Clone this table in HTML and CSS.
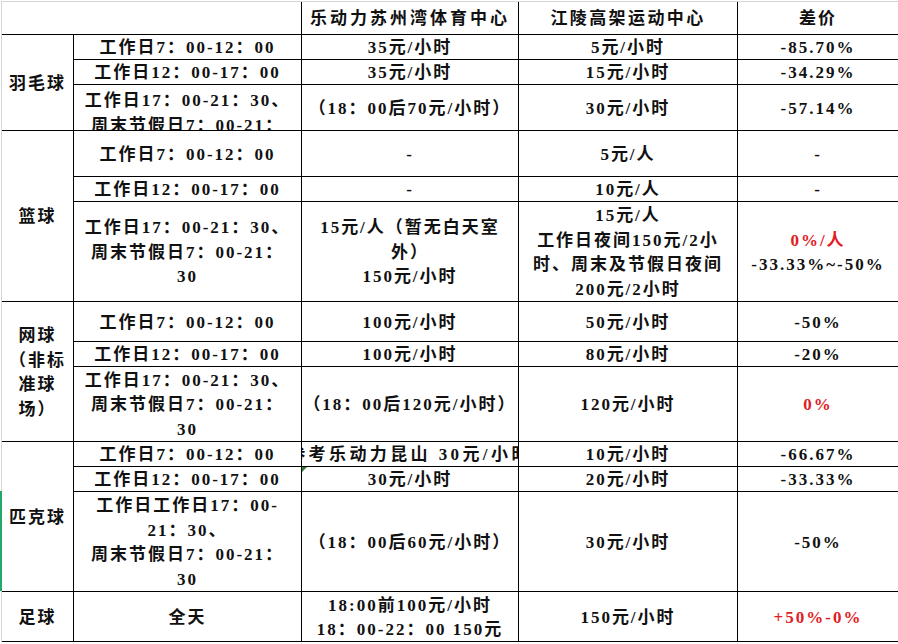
FILE: index.html
```html
<!DOCTYPE html>
<html lang="zh-CN">
<head>
<meta charset="utf-8">
<title>场馆价格对比</title>
<link rel="stylesheet" href="styles.css">
</head>
<body>
<div class="sheet">
  <div class="sel-bar"></div>

  <div class="c cs2"></div>
  <div class="c hd-a"><span class="t">乐动力苏州湾体育中心</span></div>
  <div class="c hd-b"><span class="t">江陵高架运动中心</span></div>
  <div class="c last"><span class="t">差价</span></div>

  <!-- 羽毛球 -->
  <div class="c rs3"><span class="t">羽毛球</span></div>
  <div class="c"><span class="t">工作日7：00-12：00</span></div>
  <div class="c"><span class="t">35元/小时</span></div>
  <div class="c"><span class="t">5元/小时</span></div>
  <div class="c last"><span class="t">-85.70%</span></div>

  <div class="c"><span class="t">工作日12：00-17：00</span></div>
  <div class="c"><span class="t">35元/小时</span></div>
  <div class="c"><span class="t">15元/小时</span></div>
  <div class="c last"><span class="t">-34.29%</span></div>

  <div class="c top"><span class="t">工作日17：00-21：30、<br>周末节假日7：00-21：</span></div>
  <div class="c"><span class="t">（18：00后70元/小时）</span></div>
  <div class="c"><span class="t">30元/小时</span></div>
  <div class="c last"><span class="t">-57.14%</span></div>

  <!-- 篮球 -->
  <div class="c rs3"><span class="t">篮球</span></div>
  <div class="c"><span class="t">工作日7：00-12：00</span></div>
  <div class="c"><span class="t">-</span></div>
  <div class="c"><span class="t">5元/人</span></div>
  <div class="c last"><span class="t">-</span></div>

  <div class="c"><span class="t">工作日12：00-17：00</span></div>
  <div class="c"><span class="t">-</span></div>
  <div class="c"><span class="t">10元/人</span></div>
  <div class="c last"><span class="t">-</span></div>

  <div class="c"><span class="t">工作日17：00-21：30、<br>周末节假日7：00-21：<br>30</span></div>
  <div class="c"><span class="t">15元/人（暂无白天室<br>外）<br>150元/小时</span></div>
  <div class="c"><span class="t">15元/人<br>工作日夜间150元/2小<br>时、周末及节假日夜间<br>200元/2小时</span></div>
  <div class="c last"><span class="t"><span class="red">0%/人</span><br>-33.33%~-50%</span></div>

  <!-- 网球 -->
  <div class="c rs3"><span class="t">网球<br>（非标<br>准球<br>场）</span></div>
  <div class="c"><span class="t">工作日7：00-12：00</span></div>
  <div class="c"><span class="t">100元/小时</span></div>
  <div class="c"><span class="t">50元/小时</span></div>
  <div class="c last"><span class="t">-50%</span></div>

  <div class="c"><span class="t">工作日12：00-17：00</span></div>
  <div class="c"><span class="t">100元/小时</span></div>
  <div class="c"><span class="t">80元/小时</span></div>
  <div class="c last"><span class="t">-20%</span></div>

  <div class="c"><span class="t">工作日17：00-21：30、<br>周末节假日7：00-21：<br>30</span></div>
  <div class="c"><span class="t">（18：00后120元/小时）</span></div>
  <div class="c"><span class="t">120元/小时</span></div>
  <div class="c last"><span class="t red">0%</span></div>

  <!-- 匹克球 -->
  <div class="c rs3"><span class="t">匹克球</span></div>
  <div class="c"><span class="t">工作日7：00-12：00</span></div>
  <div class="c wide"><span class="t">参考乐动力昆山 30元/小时</span></div>
  <div class="c"><span class="t">10元/小时</span></div>
  <div class="c last"><span class="t">-66.67%</span></div>

  <div class="c"><span class="t">工作日12：00-17：00</span></div>
  <div class="c flag"><span class="t">30元/小时</span></div>
  <div class="c"><span class="t">20元/小时</span></div>
  <div class="c last"><span class="t">-33.33%</span></div>

  <div class="c"><span class="t">工作日工作日17：00-<br>21：30、<br>周末节假日7：00-21：<br>30</span></div>
  <div class="c"><span class="t">（18：00后60元/小时）</span></div>
  <div class="c"><span class="t">30元/小时</span></div>
  <div class="c last"><span class="t">-50%</span></div>

  <!-- 足球 -->
  <div class="c"><span class="t">足球</span></div>
  <div class="c"><span class="t">全天</span></div>
  <div class="c"><span class="t">18:00前100元/小时<br>18：00-22：00 150元</span></div>
  <div class="c"><span class="t">150元/小时</span></div>
  <div class="c last"><span class="t red">+50%-0%</span></div>
</div>
</body>
</html>
```

FILE: styles.css
```css
html, body {
  margin: 0;
  padding: 0;
  background: #ffffff;
}

body {
  font-family: "Liberation Serif", "Noto Sans CJK SC", serif;
  font-weight: 700;
  font-size: 17px;
  color: #111111;
}

.sheet {
  position: relative;
  display: grid;
  grid-template-columns: 72px 228px 217px 219px 160px;
  grid-template-rows: 33px 25px 25px 46px 46px 25px 100px 40px 25px 75px 25px 25px 100px 50px;
  width: 896px;
  margin: 1px 0 0 1px;
  border-top: 1px solid #d6d6d6;
  border-left: 1px solid #d6d6d6;
}

.c {
  box-sizing: border-box;
  display: flex;
  flex-direction: column;
  align-items: center;
  justify-content: center;
  overflow: hidden;
  white-space: nowrap;
  text-align: center;
  border-right: 1px solid #000;
  border-bottom: 1px solid #000;
  padding-top: 3px;
  line-height: 24.5px;
  letter-spacing: 2px;
  position: relative;
}

.c.last {
  border-right: 0;
}

.c.top {
  justify-content: flex-start;
  padding-top: 4px;
}

.cs2 {
  grid-column: span 2;
}

.rs3 {
  grid-row: span 3;
}

.hd-a .t {
  letter-spacing: 3px;
}

.hd-b .t {
  letter-spacing: 2.4px;
}

.wide .t {
  letter-spacing: 3.4px;
}

.t {
  display: block;
}

.red {
  color: #e11d25;
}

.sel-bar {
  position: absolute;
  left: -2px;
  top: 489px;
  width: 2px;
  height: 100px;
  background: #21a86a;
  z-index: 2;
}

.flag::before {
  content: "";
  position: absolute;
  left: 0;
  top: 0;
  width: 0;
  height: 0;
  border-top: 5px solid #2f7d3a;
  border-right: 5px solid transparent;
}
```
